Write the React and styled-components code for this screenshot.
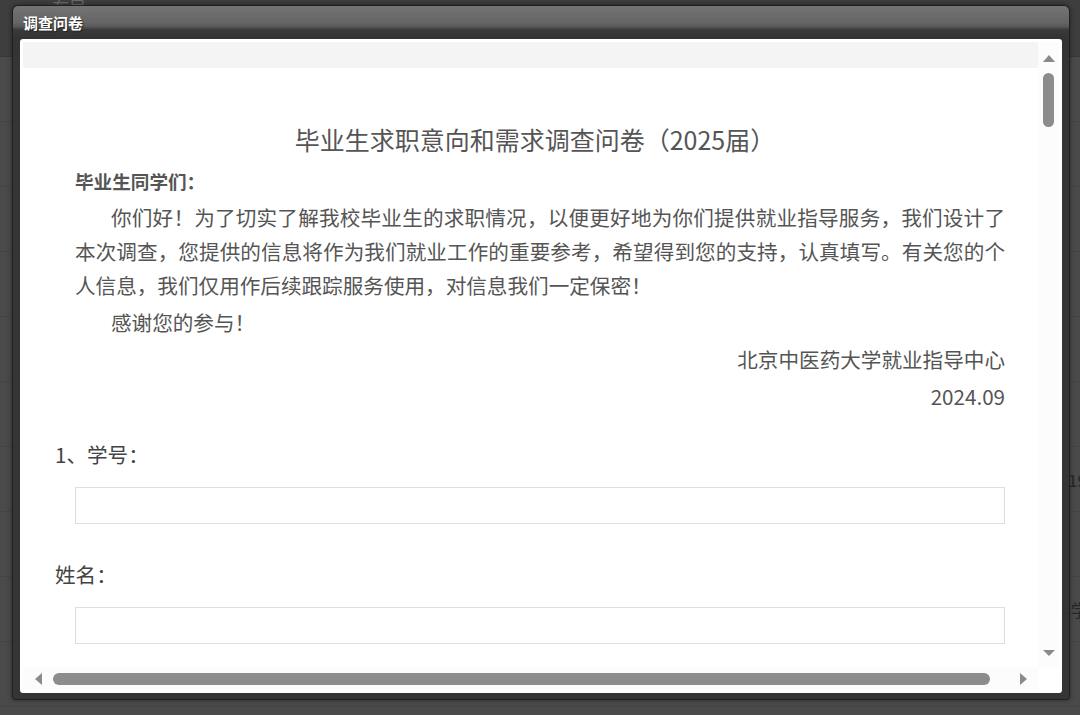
import React from 'react'
import styled, { createGlobalStyle, css } from 'styled-components'

const GlobalStyle = createGlobalStyle`
    html, body {
        margin: 0;
        padding: 0;
    }
    body {
        background: #4a4a4a;
        font-family: "Noto Sans CJK SC", "Noto Sans", sans-serif;
    }
`

const intro = '你们好！为了切实了解我校毕业生的求职情况，以便更好地为你们提供就业指导服务，我们设计了本次调查，您提供的信息将作为我们就业工作的重要参考，希望得到您的支持，认真填写。有关您的个人信息，我们仅用作后续跟踪服务使用，对信息我们一定保密！'

// rows of the page behind the dialog, only their far right edge shows
const rows = [
    { text: '' }, { text: '' }, { text: '' }, { text: '' }, { text: '' }, { text: '' },
    { text: '19', indent: 1068 }, { text: '' }, { text: '科学类', indent: 1054 }, { text: '' },
]

function App() {
    return (
        <Page>
            <GlobalStyle />
            <Backdrop>
                <TopBar>
                    <NavItem>布局<Chevron>⌄</Chevron></NavItem>
                </TopBar>
                {rows.map((row, i) => (
                    <Row key={i}>
                        <Cell indent={row.indent}>{row.text}</Cell>
                    </Row>
                ))}
            </Backdrop>

            <Dialog>
                <TitleBar>
                    <Title>调查问卷</Title>
                </TitleBar>
                <Body>
                    <Panel>
                        <Viewport>
                            <TopStrip />
                            <Form>
                                <Heading>毕业生求职意向和需求调查问卷（2025届）</Heading>
                                <Intro>
                                    <Greeting>毕业生同学们：</Greeting>
                                    <Para indent>{intro}</Para>
                                    <Para indent>感谢您的参与！</Para>
                                    <Para align="right">北京中医药大学就业指导中心</Para>
                                    <Para align="right">2024.09</Para>
                                </Intro>
                                <Question first>1、学号：</Question>
                                <TextInput type="text" />
                                <Question>姓名：</Question>
                                <TextInput type="text" />
                            </Form>
                        </Viewport>
                        <VScroll>
                            <Arrow dir="up" />
                            <VThumb />
                            <Spacer />
                            <Arrow dir="down" />
                        </VScroll>
                        <HScroll>
                            <Arrow dir="left" />
                            <HThumb size={937} />
                            <Spacer />
                            <Arrow dir="right" />
                        </HScroll>
                        <Corner />
                    </Panel>
                </Body>
            </Dialog>
        </Page>
    )
}

export default App

const Page = styled.div`
    position: relative;
    width: 1080px;
    height: 715px;
    overflow: hidden;
    background: #4a4a4a;
`

const Backdrop = styled.div`
    display: flex;
    flex-direction: column;
`

const TopBar = styled.div`
    height: 56px;
    padding-left: 52px;
    background: #3e3e3e;
    border-bottom: 1px solid #383838;
`

const NavItem = styled.div`
    display: flex;
    align-items: center;
    margin-top: -5px;
    height: 22px;
    color: #6a6a6a;
    font-size: 17px;
`

const Chevron = styled.span`
    margin-left: 6px;
    font-size: 14px;
    color: #626262;
`

const Row = styled.div`
    display: flex;
    align-items: center;
    height: 64px;
    border-bottom: 1px solid #444;
`

const Cell = styled.div`
    padding-left: ${p => p.indent || 1060}px;
    color: #262626;
    font-size: 17px;
    white-space: nowrap;
`

const Dialog = styled.div`
    position: absolute;
    left: 12px;
    top: 5px;
    width: 1058px;
    height: 695px;
    box-sizing: border-box;
    display: flex;
    flex-direction: column;
    border: 1px solid rgba(30, 30, 30, 0.9);
    border-radius: 6px 6px 4px 4px;
    background: rgba(52, 52, 52, 0.93);
    box-shadow: 0 0 5px rgba(0, 0, 0, 0.45);
`

const TitleBar = styled.div`
    display: flex;
    align-items: flex-start;
    height: 33px;
    padding-left: 10px;
    border-radius: 5px 5px 0 0;
    background: linear-gradient(
        to bottom,
        rgba(128, 128, 128, 0.84) 0%,
        rgba(108, 108, 108, 0.88) 50%,
        rgba(92, 92, 92, 0.92) 62%,
        rgba(58, 58, 58, 0.95) 72%,
        rgba(50, 50, 50, 0.95) 100%
    );
`

const Title = styled.span`
    margin-top: 7px;
    color: #fff;
    font-size: 15px;
    font-weight: bold;
    line-height: 20px;
    text-shadow: 1px 1px 1px #222;
`

const Body = styled.div`
    flex: 1;
    display: flex;
    min-height: 0;
    padding: 0 7px 6px 7px;
`

const Panel = styled.div`
    flex: 1;
    display: grid;
    grid-template-columns: 1fr 21px;
    grid-template-rows: 1fr 23px;
    min-height: 0;
    padding: 3px;
    background: #fff;
    border-radius: 3px;
    overflow: hidden;
`

const Viewport = styled.div`
    min-width: 0;
    min-height: 0;
    overflow: hidden;
`

const TopStrip = styled.div`
    height: 26px;
    background: #f4f4f4;
`

const Form = styled.div`
    padding: 53px 23px 40px 32px;
    color: #555;
`

const Heading = styled.h1`
    margin: 0;
    font-size: 25px;
    font-weight: normal;
    line-height: 36px;
    text-align: center;
    color: #555;
`

const Intro = styled.div`
    margin: 7px 10px 0 20px;
`

const Greeting = styled.div`
    font-size: 18.6px;
    font-weight: bold;
    line-height: 34px;
    color: #555;
`

const Para = styled.p`
    margin: 2px 0 3px;
    font-size: 20.6px;
    line-height: 34px;
    text-align: ${p => p.align || 'justify'};
    text-indent: ${p => (p.indent ? '36px' : '0')};
    color: #555;
`

const Question = styled.div`
    margin-top: ${p => (p.first ? '24px' : '33px')};
    font-size: 20.6px;
    line-height: 34px;
    color: #444;
`

const TextInput = styled.input`
    display: block;
    box-sizing: border-box;
    width: calc(100% - 30px);
    height: 37px;
    margin: 16px 10px 0 20px;
    border: 1px solid #dedede;
    background: #fff;
    outline: none;
`

const VScroll = styled.div`
    display: flex;
    flex-direction: column;
    align-items: center;
    padding: 13px 0 11px;
    background: #fcfcfc;
`

const HScroll = styled.div`
    display: flex;
    align-items: center;
    padding: 0 11px 0 12px;
    background: #fcfcfc;
`

const Corner = styled.div`
    background: #fff;
`

const Spacer = styled.div`
    flex: 1;
`

const VThumb = styled.div`
    margin-top: 11px;
    width: 11px;
    height: 54px;
    border-radius: 6px;
    background: #8c8c8c;
`

const HThumb = styled.div`
    margin-left: 11px;
    width: ${p => p.size}px;
    height: 12px;
    border-radius: 6px;
    background: #8c8c8c;
`

const Arrow = styled.div`
    width: 0;
    height: 0;
    flex-shrink: 0;
    ${p => p.dir === 'up' && css`
        border-left: 6.5px solid transparent;
        border-right: 6.5px solid transparent;
        border-bottom: 7px solid #8a8a8a;
    `}
    ${p => p.dir === 'down' && css`
        border-left: 6.5px solid transparent;
        border-right: 6.5px solid transparent;
        border-top: 6px solid #8a8a8a;
    `}
    ${p => p.dir === 'left' && css`
        border-top: 6.5px solid transparent;
        border-bottom: 6.5px solid transparent;
        border-right: 7px solid #8a8a8a;
    `}
    ${p => p.dir === 'right' && css`
        border-top: 6.5px solid transparent;
        border-bottom: 6.5px solid transparent;
        border-left: 7px solid #8a8a8a;
    `}
`
